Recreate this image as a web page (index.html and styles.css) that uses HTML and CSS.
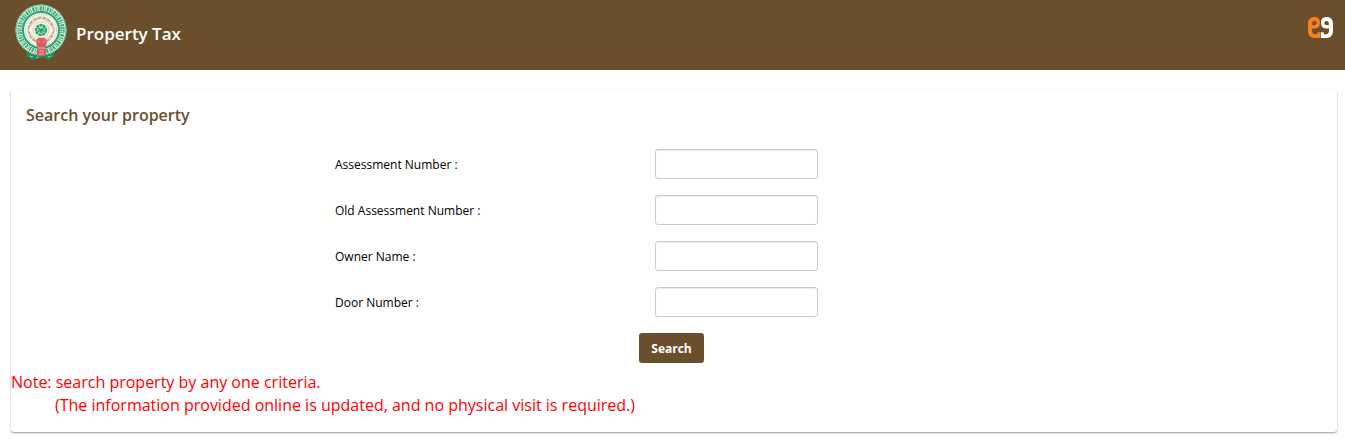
FILE: index.html
```html
<!DOCTYPE html>
<html lang="en">
<head>
    <meta charset="UTF-8">
    <meta name="viewport" content="width=device-width, initial-scale=1.0">
    <title>Property Tax</title>
    <link rel="stylesheet" href="styles.css">
</head>
<body>
    <header class="navbar">
        <svg class="emblem" viewBox="0 0 52 58" role="img" aria-label="State emblem">
            <!-- ribbon below the seal -->
            <path d="M12 49l3 1 5 2 6 1 6-1 5-2 3-1-1 5-3 1-1 2-4-1-2-2-3 1-3-1-2 2-5 1-1-2-4-1z" fill="#238d59"/>
            <path d="M15 53l3 1M33 54l3-1M21 55l3-1" stroke="#8fceb0" stroke-width="1" fill="none"/>
            <circle cx="26" cy="27" r="25.500" fill="#e6f3ec"/>
            <circle cx="26" cy="27" r="25" fill="none" stroke="#5bb98b" stroke-width="1"/>
            <!-- lettering band -->
            <circle cx="26" cy="27" r="21.500" fill="none" stroke="#39a873" stroke-width="4.500" stroke-dasharray="1.600 .800 .900 1.100 2 .900"/>
            <circle cx="26" cy="27" r="21.500" fill="none" stroke="#a9dac1" stroke-width="1" stroke-dasharray="1.500 2"/>
            <circle cx="26" cy="27" r="18" fill="#f7f8f4" stroke="#2fa26b" stroke-width="2"/>
            <circle cx="26" cy="27" r="15.500" fill="none" stroke="#a5d9bf" stroke-width="1" stroke-dasharray="2 1"/>
            <circle cx="26" cy="27" r="12.500" fill="#f2ead9" stroke="#c9a681" stroke-width="2" stroke-dasharray="4 1"/>
            <path d="M13 27q5-9 13-12 8 3 13 12-5 9-13 12-8-3-13-12z" fill="#faf6ee" stroke="#d3b896" stroke-width="1"/>
            <circle cx="26" cy="27" r="8" fill="#fff" stroke="#ddc3a3" stroke-width="1"/>
            <circle cx="26" cy="27" r="5" fill="#a7dbc0" stroke="#2fa56d" stroke-width="2.500" stroke-dasharray="3 .600"/>
            <path d="M23 25l3 2 3-2M26 27v3M23 28h6" stroke="#168c53" stroke-width="1.200" fill="none"/>
            <!-- lion capital -->
            <path d="M22 36l2-1h5l2 1 1 3-1 4-2 2v1h2v7h-9v-7h2v-1l-2-2-1-4z" fill="#db5a60"/>
            <path d="M23 38l2 1M30 38l-2 1M24 48h5M24 51h5M23 45h7" stroke="#f2b5b3" stroke-width="1" fill="none"/>
        </svg>
        <h1 class="navbar-title">Property Tax</h1>
        <!-- two mirrored halves -->
        <svg class="brand" viewBox="0 0 24 20" role="img" aria-label="eGov">
            <path fill="#f58220" fill-rule="evenodd" d="M11.500 5.500C11.500 2 9.500 0 6 0S0 2.500 0 6v7c0 4.500 2.500 7 7 7h4.700v-5.500H9.600q-1.100 0-1.100 1.500v.500H7c-2.400 0-3.200-1.500-3.200-4V11H6c3.800 0 5.500-2 5.500-5.500zM4 7.700V6a2.200 2.200 0 0 1 4.400 0q0 1.700-1.800 1.700z"/>
            <path fill="#fff" fill-rule="evenodd" transform="matrix(-1 0 0 1 24 0)" d="M11.500 5.500C11.500 2 9.500 0 6 0S0 2.500 0 6v7c0 4.500 2.500 7 7 7h4.700v-5.500H9.600q-1.100 0-1.100 1.500v.500H7c-2.400 0-3.200-1.500-3.200-4V11H6c3.800 0 5.500-2 5.500-5.500zM4 7.700V6a2.200 2.200 0 0 1 4.400 0q0 1.700-1.800 1.700z"/>
        </svg>
    </header>

    <main class="panel">
        <h2 class="panel-title">Search your property</h2>
        <form class="search-form" onsubmit="return false">
            <div class="form-row">
                <label for="assessmentNum">Assessment Number :</label>
                <input type="text" id="assessmentNum">
            </div>
            <div class="form-row">
                <label for="oldAssessmentNum">Old Assessment Number :</label>
                <input type="text" id="oldAssessmentNum">
            </div>
            <div class="form-row">
                <label for="ownerName">Owner Name :</label>
                <input type="text" id="ownerName">
            </div>
            <div class="form-row">
                <label for="doorNo">Door Number :</label>
                <input type="text" id="doorNo">
            </div>
            <div class="form-actions">
                <button type="submit" class="search-btn">Search</button>
            </div>
        </form>
        <div class="note">
            <p>Note: search property by any one criteria.</p>
            <p class="note-detail">(The information provided online is updated, and no physical visit is required.)</p>
        </div>
    </main>
</body>
</html>
```
FILE: styles.css
```css
*{
    box-sizing: border-box;
}

body{
    margin: 0;
    background-color: #fff;
    color: #000;
    font-family: "Open Sans", "Noto Sans", sans-serif;
    font-size: 12px;
}

.navbar{
    display: flex;
    align-items: flex-start;
    height: 70px;
    padding: 3px 12px 0 15px;
    background-color: #6b4f2c;
}

.emblem{
    width: 52px;
    height: 58px;
}

.navbar-title{
    margin: 19px 0 0 9px;
    color: #fff;
    font-size: 17px;
    font-weight: 600;
    line-height: 24px;
}

.brand{
    width: 25px;
    height: 21px;
    margin: 14px 0 0 auto;
}

.panel{
    margin: 19px 8px 8px 11px;
    padding: 14px 0 15px;
    border-radius: 3px;
    box-shadow: 0 1px 2px rgba(0, 0, 0, 0.4);
}

.panel-title{
    margin: 0 15px 22px;
    color: #6b4f2c;
    font-size: 16px;
    font-weight: 600;
    line-height: 24px;
}

.search-form{
    display: flex;
    flex-direction: column;
    gap: 16px;
}

.form-row{
    display: grid;
    grid-template-columns: 324fr 320fr 163fr 519fr;
    align-items: center;
}

.form-row label{
    grid-column: 2;
}

.form-row input{
    width: 100%;
    height: 30px;
    padding: 5px 10px;
    border: 1px solid #ccc;
    border-radius: 3px;
    box-shadow: inset 0 1px 1px rgba(0, 0, 0, 0.075);
    font: inherit;
}

.form-actions{
    display: flex;
    justify-content: center;
    padding-right: 5px;
}

.search-btn{
    height: 30px;
    padding: 0 12px;
    border: none;
    border-radius: 3px;
    background-color: #6b4f2c;
    color: #fff;
    font: bold 12px "Open Sans", "Noto Sans", sans-serif;
    cursor: pointer;
}

.note{
    margin-top: 8px;
    color: #f00;
    font-size: 16px;
    line-height: 23px;
}

.note p{
    margin: 0;
}

.note .note-detail{
    padding-left: 44px;
}
```
